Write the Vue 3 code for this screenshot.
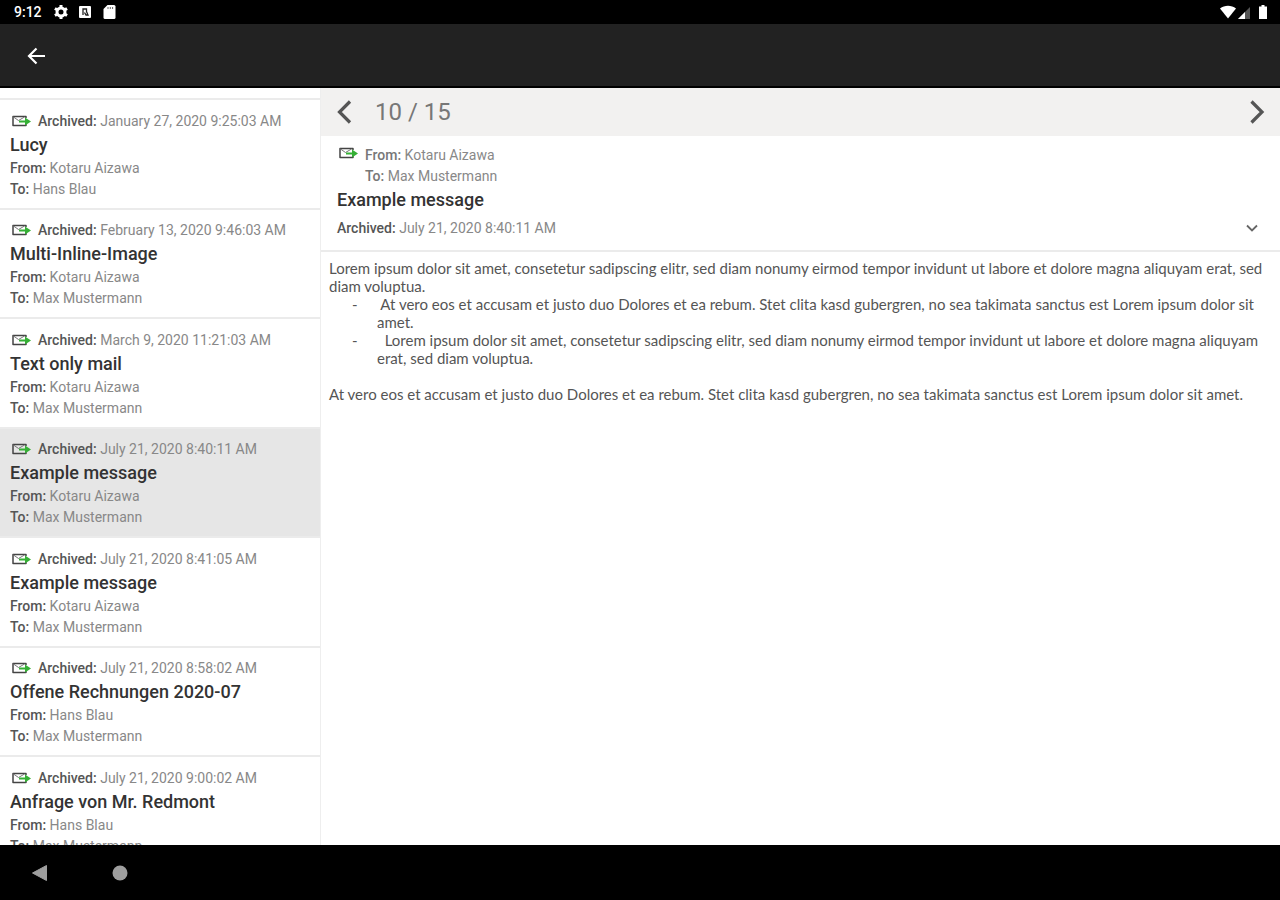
<template>
    <div class="screen">
        <header class="status-bar">
            <span class="clock">9:12</span>
            <svg class="status-icon" viewBox="0 0 16 16">
                <circle cx="8" cy="8" r="4" fill="none" stroke="#fff" stroke-width="3" />
                <path d="M8 1v14M1.9 4.5l12.2 7M1.9 11.5l12.2-7" stroke="#fff" stroke-width="3" stroke-dasharray="2.6 8.8 2.6" />
            </svg>
            <svg class="status-icon" viewBox="0 0 16 16">
                <rect x="2" y="2" width="12" height="12" rx="1" fill="#fff" />
                <path d="M6 11V5h3.500v2.500L11 11H9L7.500 8.500" fill="none" stroke="#222" stroke-width="1.300" />
            </svg>
            <svg class="status-icon" viewBox="0 0 16 16">
                <path d="M6.500 1H13a1.500 1.500 0 0 1 1.500 1.500v11A1.500 1.500 0 0 1 13 15H4a1.500 1.500 0 0 1-1.500-1.500V5z" fill="#fff" />
                <path d="M7 3v2M9.300 3v2M11.600 3v2" stroke="#666" stroke-width="1" />
            </svg>
            <div class="status-right">
                <svg width="18" height="16" viewBox="0 0 18 16">
                    <path d="M1 4.500C5.500.800 12.500.800 17 4.500L9 14.500z" fill="#fff" />
                </svg>
                <svg width="14" height="16" viewBox="0 0 14 16">
                    <path d="M1 15L13 3v12z" fill="#555" />
                    <path d="M1 15L8 8v7z" fill="#fff" />
                </svg>
                <svg class="battery" width="10" height="16" viewBox="0 0 10 16">
                    <path d="M3.500 1h3v1.500H9V15H1V2.500h2.500z" fill="#fff" />
                </svg>
            </div>
        </header>

        <div class="app-bar">
            <button class="icon-btn" type="button" aria-label="Back">
                <svg width="24" height="24" viewBox="0 0 24 24">
                    <path d="M21 12H5.500M12.500 4.500L5 12l7.500 7.500" fill="none" stroke="#fff" stroke-width="2.200" />
                </svg>
            </button>
        </div>

        <main class="content">
            <ul class="mail-list">
                <li v-for="mail in mails" :key="mail.id">
                    <button type="button" class="mail" :class="{ selected: mail.id === selectedId }"
                        @click="selectedId = mail.id">
                        <span class="mail-date">
                            <svg class="mail-icon" viewBox="0 0 20 14">
                                <path d="M16 4V2.500H3v9h13V10" fill="none" stroke="#444" stroke-width="1.500" stroke-linejoin="round" />
                                <path d="M3.500 3l5 3.500 6-3.500" fill="none" stroke="#777" stroke-width="1" />
                                <path d="M9 7.500h7" stroke="#35b035" stroke-width="2" />
                                <path d="M15 3.500l6 4-6 4z" fill="#35b035" />
                            </svg>
                            <span><b>Archived:</b> {{ mail.date }}</span>
                        </span>
                        <span class="subject">{{ mail.subject }}</span>
                        <span class="person"><b>From:</b> {{ mail.from }}</span>
                        <span class="person"><b>To:</b> {{ mail.to }}</span>
                    </button>
                </li>
            </ul>

            <section class="detail">
                <nav class="pager">
                    <button class="icon-btn" type="button" aria-label="Previous message">
                        <svg width="16" height="24" viewBox="0 0 16 24">
                            <path d="M14 1.500L3.500 12 14 22.500" fill="none" stroke="#555" stroke-width="3.200" />
                        </svg>
                    </button>
                    <span class="position">10 / 15</span>
                    <button class="icon-btn next" type="button" aria-label="Next message">
                        <svg width="16" height="24" viewBox="0 0 16 24">
                            <path d="M2.500 1.500L13 12 2.500 22.500" fill="none" stroke="#555" stroke-width="3.200" />
                        </svg>
                    </button>
                </nav>

                <div class="mail-head">
                    <div class="people">
                        <svg class="mail-icon" viewBox="0 0 20 14">
                            <path d="M16 4V2.500H3v9h13V10" fill="none" stroke="#444" stroke-width="1.500" stroke-linejoin="round" />
                            <path d="M3.500 3l5 3.500 6-3.500" fill="none" stroke="#777" stroke-width="1" />
                            <path d="M9 7.500h7" stroke="#35b035" stroke-width="2" />
                            <path d="M15 3.500l6 4-6 4z" fill="#35b035" />
                        </svg>
                        <div>
                            <div class="person"><b>From:</b> Kotaru Aizawa</div>
                            <div class="person"><b>To:</b> Max Mustermann</div>
                        </div>
                    </div>
                    <h1 class="subject">Example message</h1>
                    <div class="archived-row">
                        <span><b>Archived:</b> July 21, 2020 8:40:11 AM</span>
                        <button class="icon-btn" type="button" aria-label="Show details">
                            <svg width="16" height="16" viewBox="0 0 16 16">
                                <path d="M3 5.500l5 5 5-5" fill="none" stroke="#666" stroke-width="1.800" />
                            </svg>
                        </button>
                    </div>
                </div>

                <article class="mail-body">
                    <p>Lorem ipsum dolor sit amet, consetetur sadipscing elitr, sed diam nonumy eirmod tempor invidunt ut labore et dolore magna aliquyam erat, sed diam voluptua.</p>
                    <ul>
                        <li>&nbsp;At vero eos et accusam et justo duo Dolores et ea rebum. Stet clita kasd gubergren, no sea takimata sanctus est Lorem ipsum dolor sit amet.</li>
                        <li>&nbsp;&nbsp;Lorem ipsum dolor sit amet, consetetur sadipscing elitr, sed diam nonumy eirmod tempor invidunt ut labore et dolore magna aliquyam erat, sed diam voluptua.</li>
                    </ul>
                    <p>At vero eos et accusam et justo duo Dolores et ea rebum. Stet clita kasd gubergren, no sea takimata sanctus est Lorem ipsum dolor sit amet.</p>
                </article>
            </section>
        </main>

        <footer class="nav-bar">
            <button class="icon-btn" type="button" aria-label="System back">
                <svg width="20" height="20" viewBox="0 0 20 20">
                    <path d="M16.500 2.500v15L2.500 10z" fill="#9e9e9e" stroke="#9e9e9e" stroke-linejoin="round" />
                </svg>
            </button>
            <button class="icon-btn" type="button" aria-label="Home">
                <svg width="20" height="20" viewBox="0 0 20 20">
                    <circle cx="10" cy="10" r="7.500" fill="#9e9e9e" />
                </svg>
            </button>
        </footer>
    </div>
</template>

<script setup>
import { ref } from 'vue'

const selectedId = ref(4)

const mails = [
    { id: 1, date: 'January 27, 2020 9:25:03 AM', subject: 'Lucy', from: 'Kotaru Aizawa', to: 'Hans Blau' },
    { id: 2, date: 'February 13, 2020 9:46:03 AM', subject: 'Multi-Inline-Image', from: 'Kotaru Aizawa', to: 'Max Mustermann' },
    { id: 3, date: 'March 9, 2020 11:21:03 AM', subject: 'Text only mail', from: 'Kotaru Aizawa', to: 'Max Mustermann' },
    { id: 4, date: 'July 21, 2020 8:40:11 AM', subject: 'Example message', from: 'Kotaru Aizawa', to: 'Max Mustermann' },
    { id: 5, date: 'July 21, 2020 8:41:05 AM', subject: 'Example message', from: 'Kotaru Aizawa', to: 'Max Mustermann' },
    { id: 6, date: 'July 21, 2020 8:58:02 AM', subject: 'Offene Rechnungen 2020-07', from: 'Hans Blau', to: 'Max Mustermann' },
    { id: 7, date: 'July 21, 2020 9:00:02 AM', subject: 'Anfrage von Mr. Redmont', from: 'Hans Blau', to: 'Max Mustermann' },
]
</script>

<style>
body {
    margin: 0;
    background: #000;
}
</style>

<style scoped>
.screen {
    display: flex;
    flex-direction: column;
    height: 100vh;
    font-family: Roboto, "Liberation Sans", sans-serif;
    font-size: 14px;
    color: #888;
    background: #fff;
}

b {
    font-weight: 500;
    color: #555;
}

svg {
    display: block;
    flex-shrink: 0;
}

.icon-btn {
    display: flex;
    padding: 0;
    border: 0;
    background: none;
    cursor: pointer;
}

.status-bar {
    display: flex;
    align-items: center;
    height: 24px;
    padding: 0 12px 0 14px;
    background: #000;
    color: #fff;
}

.clock {
    width: 39px;
    font-weight: 500;
}

.status-icon {
    width: 16px;
    height: 16px;
    margin-right: 8px;
}

.status-right {
    display: flex;
    margin-left: auto;
}

.battery {
    margin-left: 7px;
}

.app-bar {
    display: flex;
    align-items: center;
    height: 60px;
    padding: 2px 24px 0;
    background: #222;
    border-bottom: 2px solid #000;
}

.content {
    display: flex;
    flex: 1;
    min-height: 0;
}

.mail-list {
    display: grid;
    grid-auto-rows: 110px 109px;
    align-content: start;
    width: 25%;
    box-sizing: border-box;
    margin: 0;
    padding: 10px 0 0;
    overflow: hidden;
    list-style: none;
}

.mail {
    display: block;
    width: 100%;
    height: 100%;
    padding: 9px 10px 8px;
    border: 0;
    border-top: 2px solid #ebebeb;
    background: #fff;
    font: inherit;
    line-height: 21px;
    color: inherit;
    text-align: left;
    cursor: pointer;
}

.mail.selected {
    background: #e6e6e6;
}

.mail span {
    white-space: nowrap;
}

.mail-date {
    display: flex;
    align-items: center;
    gap: 8px;
    line-height: 22px;
}

.mail-icon {
    width: 20px;
    height: 14px;
    overflow: visible;
}

.subject {
    display: block;
    margin: 0;
    font-size: 18px;
    font-weight: 500;
    line-height: 26px;
    color: #333;
}

.person {
    display: block;
    line-height: 21px;
}

.detail {
    flex: 1;
    min-width: 0;
    border-left: 1px solid #eee;
    overflow: hidden;
}

.pager {
    display: flex;
    align-items: center;
    height: 48px;
    padding: 0 15px;
    background: #f2f1f0;
}

.position {
    margin-left: 23px;
    font-size: 24px;
    color: #777;
}

.next {
    margin-left: auto;
}

.mail-head {
    padding: 9px 16px 7px;
    border-bottom: 2px solid #ebebeb;
}

.people {
    display: flex;
    gap: 8px;
}

.people .mail-icon {
    margin-top: 1px;
}

.people b {
    color: #777;
}

.archived-row {
    display: flex;
    align-items: center;
    justify-content: space-between;
    padding-right: 4px;
    line-height: 30px;
}

.mail-body {
    padding: 7px 16px 8px 8px;
    font-family: Lato, Roboto, sans-serif;
    font-size: 15px;
    line-height: 18px;
    color: #555;
}

.mail-body p {
    margin: 0;
}

.mail-body ul {
    margin: 0 0 18px;
    padding-left: 48px;
    list-style: none;
}

.mail-body li::before {
    content: "-";
    display: inline-block;
    width: 25px;
    margin-left: -25px;
}

.nav-bar {
    display: flex;
    align-items: center;
    gap: 60px;
    height: 55px;
    padding: 0 30px;
    background: #000;
}
</style>
